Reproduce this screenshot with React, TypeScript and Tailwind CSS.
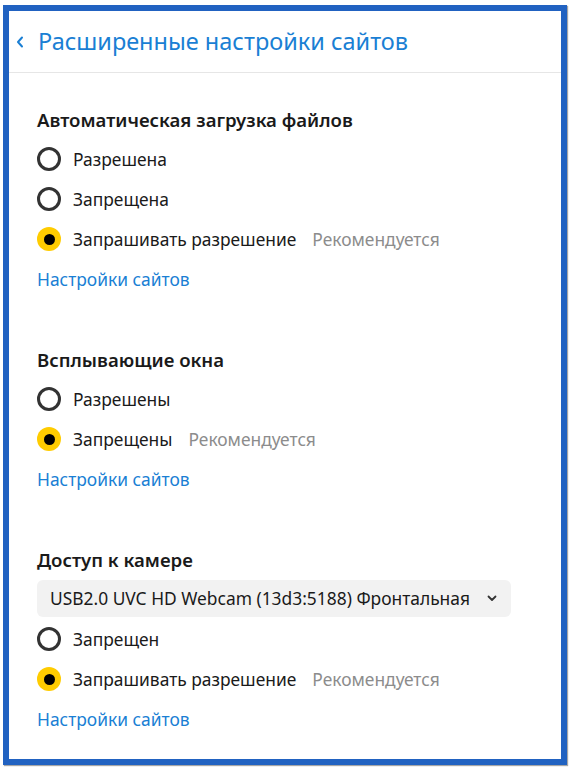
import React from "react"

type Opt = { label: string; checked?: boolean; recommended?: boolean }

function Radio({ label, checked, recommended }: Opt) {
  return (
    <div className="flex h-10 items-center">
      {checked ? (
        <span className="flex h-6 w-6 items-center justify-center rounded-full bg-[#ffcc00]">
          <span className="h-[11px] w-[11px] rounded-full bg-black" />
        </span>
      ) : (
        <span className="h-6 w-6 rounded-full border-[3px] border-[#333333]" />
      )}
      <span className="ml-3 text-[#1a1a1a]">{label}</span>
      {recommended && <span className="ml-4 text-[#8c8c8c]">Рекомендуется</span>}
    </div>
  )
}

function Section({ title, options, select }: { title: string; options: Opt[]; select?: string }) {
  return (
    <div>
      <div className="flex h-[39px] items-center text-[18.6px] font-semibold text-[#1a1a1a]">{title}</div>
      {select && (
        <div className="flex h-10 items-start pt-px">
          <div className="flex h-[37px] w-[474px] items-center justify-between rounded-md bg-[#f2f2f2] pl-[13px] pr-[14px] text-[#1a1a1a]">
            <span className="whitespace-nowrap">{select}</span>
            <svg width="10" height="7" viewBox="0 0 10 7" fill="none">
              <path d="M1.5 1.5L5 5L8.5 1.5" stroke="#333" strokeWidth="1.8" strokeLinecap="round" strokeLinejoin="round" />
            </svg>
          </div>
        </div>
      )}
      {options.map((o) => (
        <Radio key={o.label} {...o} />
      ))}
      <div className="flex h-10 items-center text-[#1a7fd4]">Настройки сайтов</div>
    </div>
  )
}

export default function App() {
  return (
    <div className="min-h-screen bg-white pl-[3px] pt-[5px]" style={{ fontFamily: '"Noto Sans", "Open Sans", sans-serif' }}>
      <div className="h-[760px] w-[564px] border-[6px] border-[#2162c1] bg-white shadow-[1px_1px_1px_rgba(0,0,0,0.35)]">
        <div className="flex h-[62px] items-center border-b border-[#e6e6e6] pl-[7px]">
          <svg width="8" height="12" viewBox="0 0 8 12" fill="none">
            <path d="M6 1.5L2 6L6 10.5" stroke="#1a7fd4" strokeWidth="2" strokeLinecap="round" strokeLinejoin="round" />
          </svg>
          <span className="ml-[14px] text-[23.5px] text-[#1a7fd4]">Расширенные настройки сайтов</span>
        </div>
        <div className="flex flex-col gap-[41px] pl-[28px] pt-[27px] text-[17.4px]">
          <Section
            title="Автоматическая загрузка файлов"
            options={[
              { label: "Разрешена" },
              { label: "Запрещена" },
              { label: "Запрашивать разрешение", checked: true, recommended: true },
            ]}
          />
          <Section
            title="Всплывающие окна"
            options={[
              { label: "Разрешены" },
              { label: "Запрещены", checked: true, recommended: true },
            ]}
          />
          <Section
            title="Доступ к камере"
            select="USB2.0 UVC HD Webcam (13d3:5188) Фронтальная"
            options={[
              { label: "Запрещен" },
              { label: "Запрашивать разрешение", checked: true, recommended: true },
            ]}
          />
        </div>
      </div>
    </div>
  )
}
